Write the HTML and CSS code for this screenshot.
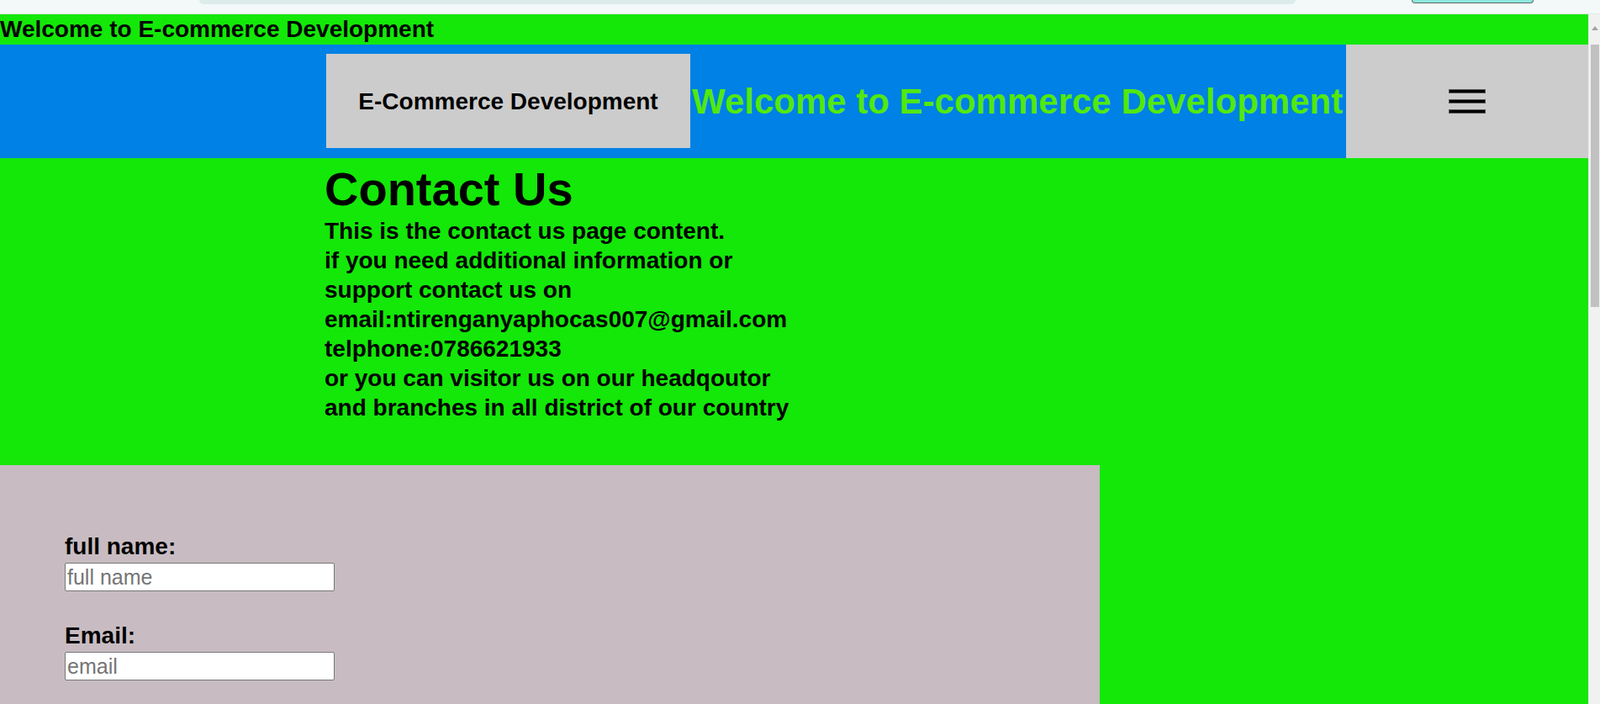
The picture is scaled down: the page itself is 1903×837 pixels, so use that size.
FILE: index.html
```html
<!DOCTYPE html>
<html lang="en">
<head>
<meta charset="utf-8">
<title>Contact Us - E-Commerce Development</title>
<link rel="stylesheet" href="styles.css">
</head>
<body>
<div class="browser-top">
  <div class="omnibox"></div>
  <div class="ext-btn"></div>
</div>
<div class="page">
  <div class="topbar">Welcome to E-commerce Development</div>
  <header class="header">
    <div class="logo">E-Commerce Development</div>
    <h2 class="site-title">Welcome to E-commerce Development</h2>
    <div class="menu">
      <svg class="burger" width="44" height="29" viewBox="0 0 44 29" aria-hidden="true">
        <rect x="0.5" y="0.5" width="43" height="4" fill="#000" stroke="#555" stroke-width="1"/>
        <rect x="0.5" y="12.5" width="43" height="4" fill="#000" stroke="#555" stroke-width="1"/>
        <rect x="0.5" y="24.5" width="43" height="4" fill="#000" stroke="#555" stroke-width="1"/>
      </svg>
    </div>
  </header>
  <main class="contact">
    <h1 class="contact-title">Contact Us</h1>
    <p class="contact-text">This is the contact us page content.<br>if you need additional information or support contact us on<br>email:ntirenganyaphocas007@gmail.com<br>telphone:0786621933<br>or you can visitor us on our headqoutor and branches in all district of our country</p>
  </main>
  <section class="form-section">
    <form class="contact-form">
      <div class="field">
        <label class="field-label" for="fullname">full name:</label>
        <input class="field-input" type="text" id="fullname" placeholder="full name">
      </div>
      <div class="field">
        <label class="field-label" for="email">Email:</label>
        <input class="field-input" type="email" id="email" placeholder="email">
      </div>
    </form>
  </section>
</div>
<div class="scrollbar" aria-hidden="true">
  <div class="scroll-arrow"></div>
  <div class="scroll-thumb"></div>
</div>
</body>
</html>
```
FILE: styles.css
```css
html, body {
  margin: 0;
  padding: 0;
}
body {
  background: #13e808;
  font-family: "Liberation Sans", Arial, sans-serif;
  color: #000;
}
.browser-top {
  height: 17px;
  box-sizing: border-box;
  background: #f3f9f8;
  border-bottom: 1px solid #e1e8e7;
  display: flex;
  align-items: flex-start;
}
.omnibox {
  margin-left: 237px;
  width: 1304px;
  height: 5px;
  background: #dcecea;
  border-radius: 0 0 12px 12px;
}
.ext-btn {
  margin-left: 138px;
  width: 145px;
  height: 4px;
  box-sizing: border-box;
  background: #8fe8de;
  border: 1px solid #5d6b6a;
  border-top: none;
  border-radius: 0 0 10px 10px;
}
.page {
  margin-right: 14px;
}
.topbar {
  height: 36px;
  line-height: 36px;
  font-size: 28px;
  font-weight: 700;
  white-space: nowrap;
}
.header {
  display: flex;
  align-items: stretch;
  height: 135px;
  background: #0081e5;
  padding-left: 388px;
}
.logo {
  flex: 0 0 433px;
  height: 112px;
  margin: 11px 0 12px;
  background: #cccccc;
  display: flex;
  align-items: center;
  justify-content: center;
  padding-top: 2px;
  box-sizing: border-box;
  font-size: 28px;
  font-weight: 700;
  white-space: nowrap;
}
.site-title {
  flex: 0 0 778px;
  margin: 0 0 0 2px;
  align-self: center;
  font-size: 42px;
  font-weight: 700;
  color: #52e810;
  white-space: nowrap;
  overflow: hidden;
}
.menu {
  flex: 1 1 auto;
  background: #cccccc;
  display: flex;
  align-items: center;
  justify-content: center;
}
.burger {
  display: block;
}
.contact {
  padding: 5px 0 51px 386px;
}
.contact-title {
  margin: 0;
  font-size: 56px;
  line-height: 64px;
  font-weight: 700;
}
.contact-text {
  margin: 0;
  width: 565px;
  font-size: 28px;
  line-height: 35px;
  font-weight: 700;
}
.form-section {
  width: 1308px;
  min-height: 284px;
  background: #c8bcc2;
  padding: 81px 0 0 77px;
  box-sizing: border-box;
}
.contact-form {
  display: flex;
  flex-direction: column;
  align-items: flex-start;
}
.field {
  display: flex;
  flex-direction: column;
  align-items: flex-start;
  gap: 3px;
  margin-bottom: 37px;
}
.field-label {
  font-size: 28px;
  line-height: 32px;
  font-weight: 700;
}
.field-input {
  width: 321px;
  height: 34px;
  box-sizing: border-box;
  padding: 1px 2px;
  border: 1px solid #767676;
  border-radius: 2px;
  background: #fff;
  font-family: "Liberation Sans", Arial, sans-serif;
  font-size: 25px;
}
.field-input::placeholder {
  color: #757575;
}
.scrollbar {
  position: fixed;
  top: 17px;
  right: 0;
  bottom: 0;
  width: 14px;
  background: #f1f1f1;
  border-left: 1px solid #e8e8e8;
  box-sizing: border-box;
  display: flex;
  flex-direction: column;
  align-items: center;
}
.scroll-arrow {
  margin-top: 14px;
  width: 0;
  height: 0;
  border-left: 4px solid transparent;
  border-right: 4px solid transparent;
  border-bottom: 5px solid #a3a3a3;
}
.scroll-thumb {
  margin-top: 17px;
  width: 10px;
  height: 312px;
  background: #c1c1c1;
}
```
